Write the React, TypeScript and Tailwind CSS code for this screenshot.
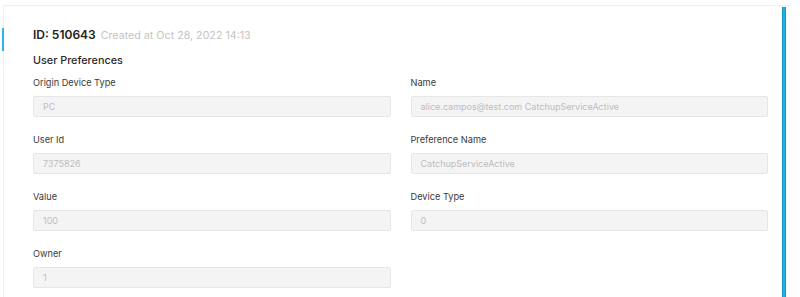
import React from "react";

const fields: { label: string; value: string }[][] = [
  [
    { label: "Origin Device Type", value: "PC" },
    { label: "Name", value: "alice.campos@test.com CatchupServiceActive" },
  ],
  [
    { label: "User Id", value: "7375826" },
    { label: "Preference Name", value: "CatchupServiceActive" },
  ],
  [
    { label: "Value", value: "100" },
    { label: "Device Type", value: "0" },
  ],
  [{ label: "Owner", value: "1" }],
];

function Field({ label, value }: { label: string; value: string }) {
  return (
    <div className="flex flex-col">
      <div className="text-[9.2px] leading-[14px] text-[#3a3a3a]">{label}</div>
      <div className="mt-[6px] h-[21px] rounded-[2px] border border-[#e6e6e6] bg-[#f4f4f4] px-[9px] flex items-center text-[9px] text-[#bdbdbd]">
        {value}
      </div>
    </div>
  );
}

export default function App() {
  return (
    <div
      className="w-[800px] h-[297px] overflow-hidden bg-white pt-[5px] pl-[3px] pr-[8px]"
      style={{ fontFamily: "Inter, 'Noto Sans', sans-serif" }}
    >
      <div className="relative flex h-[300px] border-t border-l border-[#f0f0f0] pr-[6px]">
        <div className="absolute left-[-2px] top-[22px] h-[23px] w-[2px] bg-[#29b6e8]" />
        <div className="flex-1 pl-[29px] pr-[14px] pt-[20px]">
          <div className="flex items-baseline gap-[5px] h-[20px]">
            <span className="text-[12px] font-semibold text-[#222]">ID: 510643</span>
            <span className="text-[10.7px] text-[#c4c4c4]">Created at Oct 28, 2022 14:13</span>
          </div>
          <div className="mt-[7px] text-[10.8px] leading-[16px] font-medium text-[#2a2a2a]">
            User Preferences
          </div>
          <div className="mt-[7px] flex flex-col gap-[16px]">
            {fields.map((row, i) => (
              <div key={i} className="grid grid-cols-2 gap-x-[20px]">
                {row.map((f) => (
                  <Field key={f.label} label={f.label} value={f.value} />
                ))}
              </div>
            ))}
          </div>
        </div>
        <div className="mt-[1px] w-[4px] bg-[#1fb0e6] border-x border-[#1596cc]" />
      </div>
    </div>
  );
}
